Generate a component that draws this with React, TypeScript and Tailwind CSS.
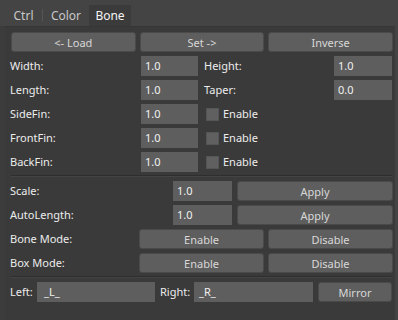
const font = { fontFamily: '"Noto Sans", "Open Sans", sans-serif' };

function Btn({ label, className = "" }: { label: string; className?: string }) {
  return (
    <button
      className={`h-[20px] rounded-[3px] border border-[#4a4a4a] bg-[#5e5e5e] text-[11px] text-[#d8d8d8] leading-none ${className}`}
    >
      {label}
    </button>
  );
}

function Field({ value, className = "" }: { value: string; className?: string }) {
  return (
    <div
      className={`h-[20px] bg-[#5e5e5e] pl-[4px] flex items-center text-[11px] text-[#f0f0f0] ${className}`}
    >
      {value}
    </div>
  );
}

function Check() {
  return <div className="w-[13px] h-[13px] bg-[#606060] border border-[#555]" />;
}

function Sep() {
  return <div className="h-[2px] mx-[1px] border-t border-[#2e2e2e] bg-[#444]" />;
}

export default function App() {
  const fins = ["SideFin:", "FrontFin:", "BackFin:"];
  return (
    <div className="w-[398px] h-[320px] bg-[#444444] text-[#ececec] overflow-hidden flex flex-col" style={font}>
      {/* Tabs */}
      <div className="h-[26px] flex items-end pl-[5px] text-[12px]">
        <div className="h-[21px] w-[37px] flex items-center justify-center text-[#c8c8c8]">Ctrl</div>
        <div className="h-[12px] w-px bg-[#555] mb-[5px]" />
        <div className="h-[21px] w-[46px] flex items-center justify-center text-[#c8c8c8]">Color</div>
        <div className="h-[21px] w-[42px] flex items-center justify-center bg-[#3b3b3b] text-[#f4f4f4]">Bone</div>
      </div>

      {/* Panel */}
      <div className="flex flex-1">
        <div className="w-[5px] bg-[#3c3c3c]" />
        <div className="w-[390px] bg-[#3a3a3a] border-t border-[#363636] pt-[5px] pl-[5px] pr-[2px] text-[11px]">
          <div className="grid grid-cols-3 gap-[4px] pl-[1px]">
            <Btn label="<- Load" />
            <Btn label="Set ->" />
            <Btn label="Inverse" />
          </div>

          <div className="flex flex-col gap-[4px] mt-[4px]">
            <div className="flex items-center h-[20px]">
              <span className="w-[131px]">Width:</span>
              <Field value="1.0" className="w-[57px]" />
              <span className="ml-[6px] w-[130px]">Height:</span>
              <Field value="1.0" className="w-[58px]" />
            </div>
            <div className="flex items-center h-[20px]">
              <span className="w-[131px]">Length:</span>
              <Field value="1.0" className="w-[57px]" />
              <span className="ml-[6px] w-[130px]">Taper:</span>
              <Field value="0.0" className="w-[58px]" />
            </div>
            {fins.map((f) => (
              <div key={f} className="flex items-center h-[20px]">
                <span className="w-[131px]">{f}</span>
                <Field value="1.0" className="w-[57px]" />
                <div className="ml-[8px]">
                  <Check />
                </div>
                <span className="ml-[4px]">Enable</span>
              </div>
            ))}
          </div>

          <div className="mt-[3px] mb-[4px]">
            <Sep />
          </div>

          <div className="flex flex-col gap-[4px]">
            {["Scale:", "AutoLength:"].map((l) => (
              <div key={l} className="flex items-center h-[20px]">
                <span className="w-[163px]">{l}</span>
                <Field value="1.0" className="w-[59px]" />
                <Btn label="Apply" className="ml-[5px] w-[156px]" />
              </div>
            ))}
            {["Bone Mode:", "Box Mode:"].map((l) => (
              <div key={l} className="flex items-center h-[20px]">
                <span className="w-[129px]">{l}</span>
                <Btn label="Enable" className="w-[125px]" />
                <Btn label="Disable" className="ml-[4px] w-[125px]" />
              </div>
            ))}
          </div>

          <div className="mt-[3px] mb-[4px]">
            <Sep />
          </div>

          <div className="flex items-center h-[20px]">
            <span className="w-[27px]">Left:</span>
            <Field value="_L_" className="w-[118px] pl-[7px]" />
            <span className="ml-[5px] w-[34px]">Right:</span>
            <Field value="_R_" className="w-[119px] pl-[5px]" />
            <Btn label="Mirror" className="ml-[5px] w-[74px]" />
          </div>
        </div>
      </div>
    </div>
  );
}
